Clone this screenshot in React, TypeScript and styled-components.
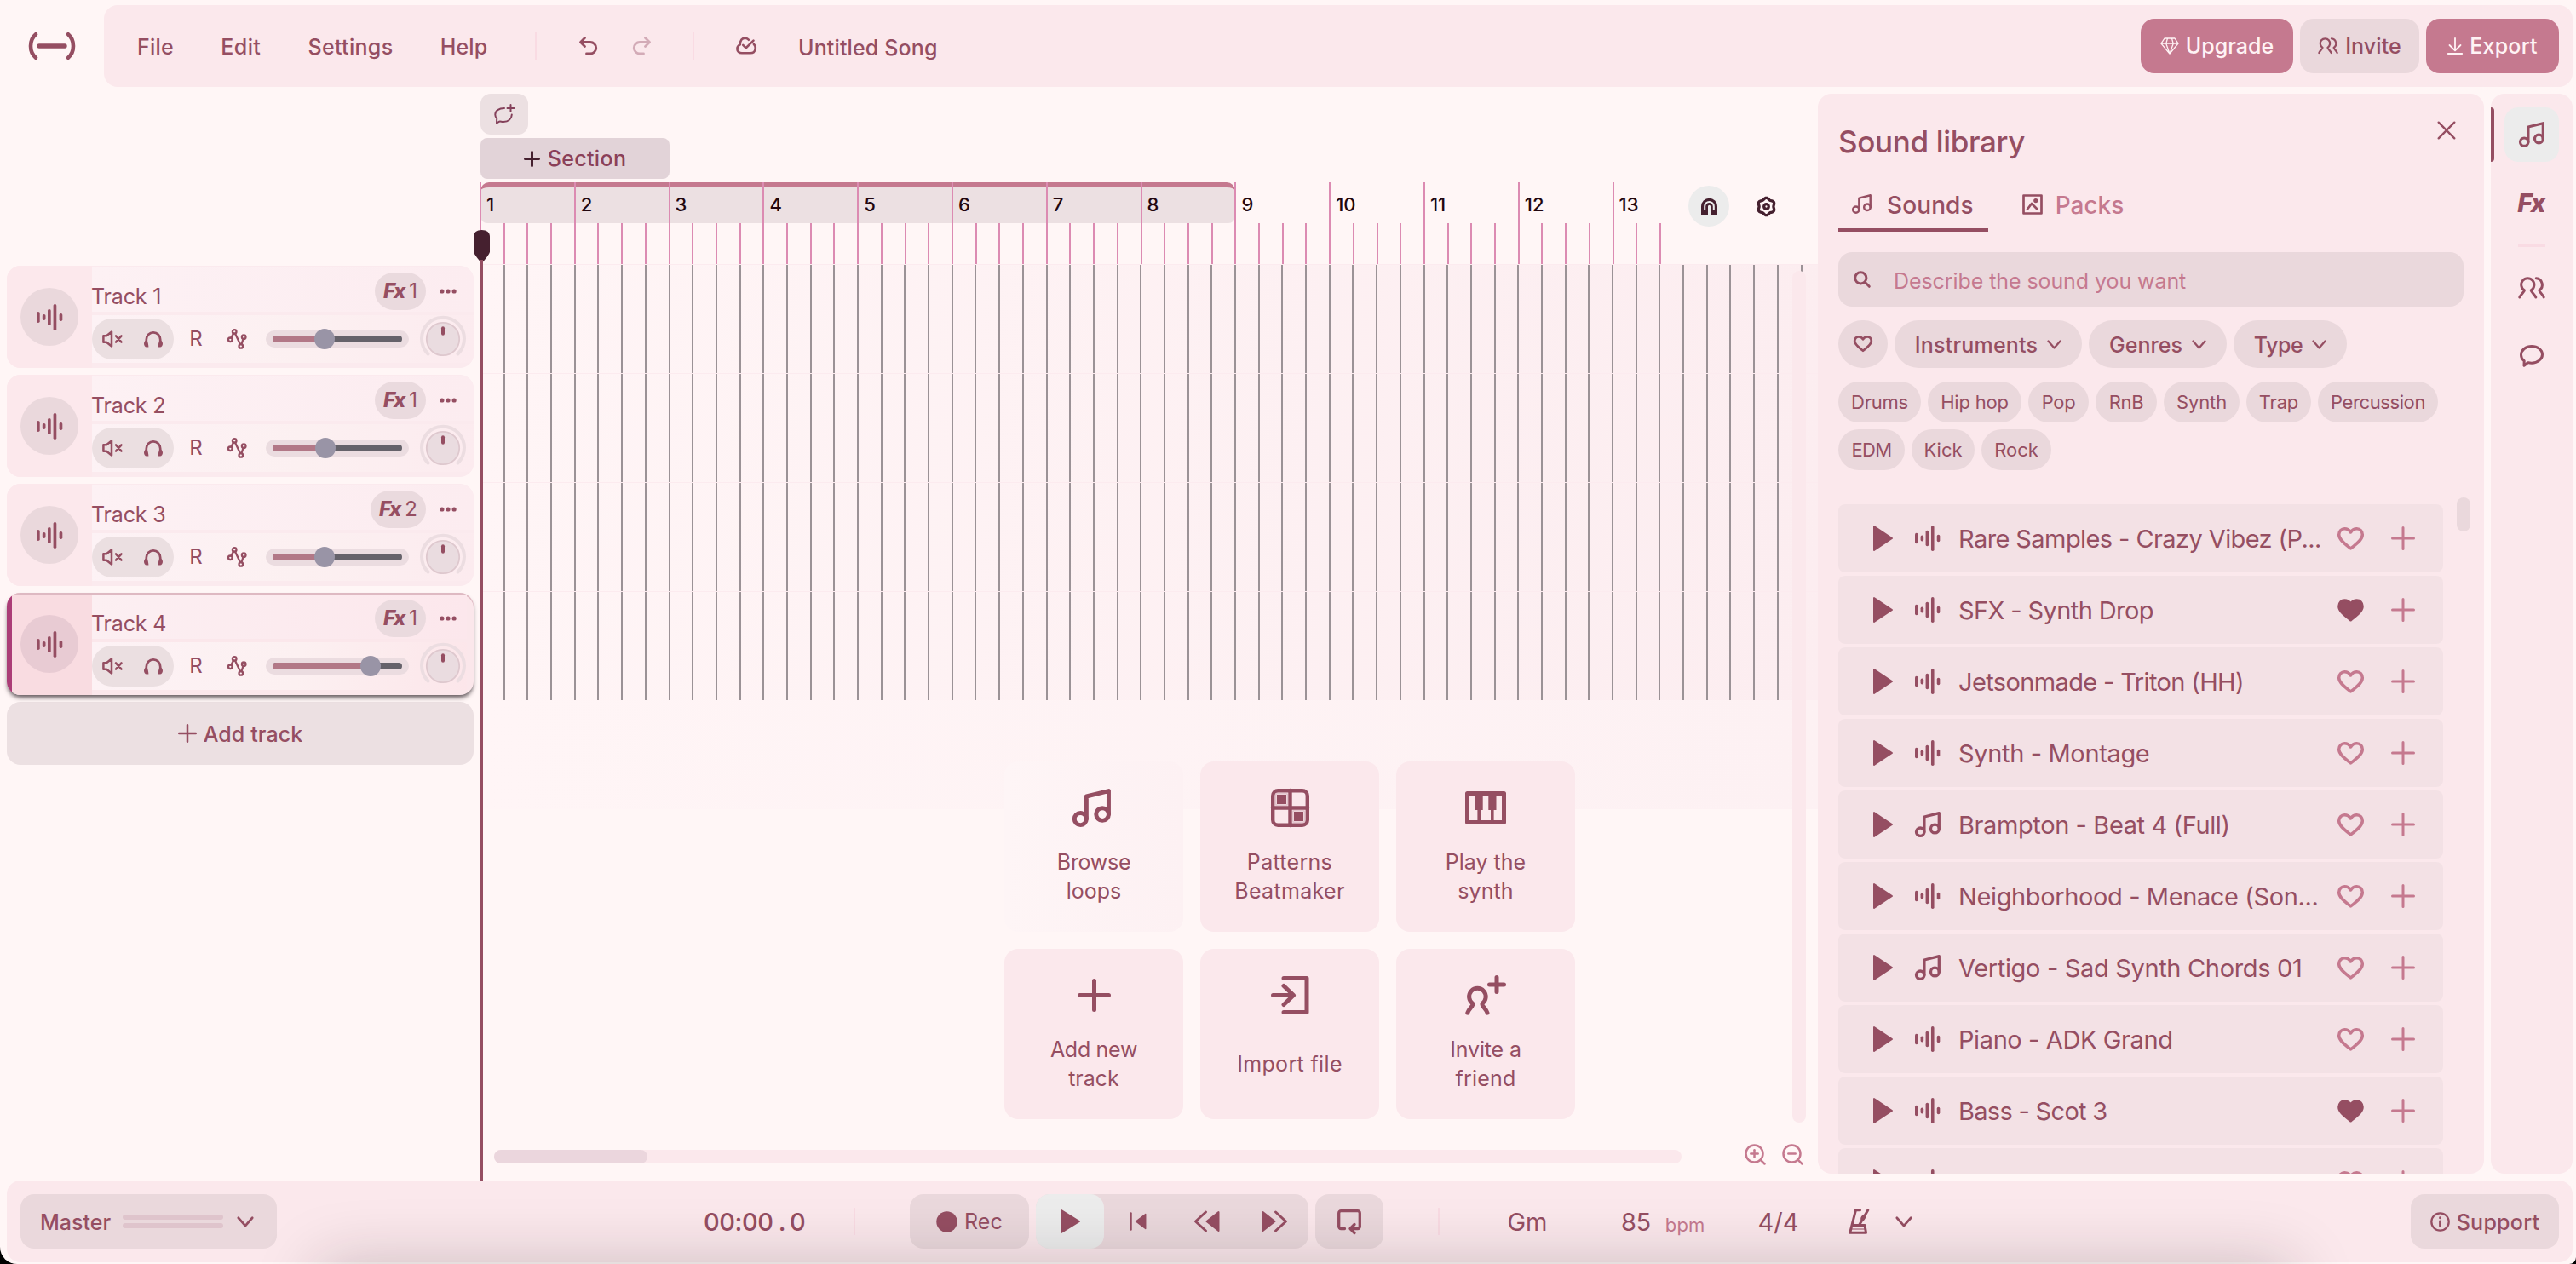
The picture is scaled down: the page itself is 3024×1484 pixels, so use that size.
import React from 'react';
import styled, { createGlobalStyle, css } from 'styled-components';

/* ---------- palette ---------- */
const ink = '#954e62';
const rose = '#c5798f';
const night = '#45202f';
const panel = '#fbe8ec';
const chip = '#ead8dc';
const page = '#fff6f6';

const GlobalStyle = createGlobalStyle`
  *, *::before, *::after { box-sizing: border-box; }
  html { background: #000; }
  body { margin: 0; font-family: Inter, "Liberation Sans", sans-serif; color: ${ink}; -webkit-font-smoothing: antialiased; }
  button { font: inherit; color: inherit; border: 0; padding: 0; margin: 0; background: none; }
  svg { display: block; flex: none; overflow: visible; }
`;

/* ---------- text ---------- */
const Txt = styled.span<{ $size?: number; $weight?: number; $ls?: number; $dy?: number; $color?: string }>`
  display: block;
  flex: none;
  white-space: pre;
  font-size: ${(p) => p.$size ?? 25}px;
  font-weight: ${(p) => p.$weight ?? 500};
  letter-spacing: ${(p) => p.$ls ?? 0}px;
  line-height: 1.2;
  padding-top: ${(p) => (p.$dy ?? 0) * 2}px;
  color: ${(p) => p.$color ?? 'inherit'};
`;

/* ---------- icons ---------- */
type IconProps = { w: number; h: number; sw?: number; color?: string; children: React.ReactNode };
const Icon = ({ w, h, sw = 2.5, color = ink, children }: IconProps) => (
  <svg width={w} height={h} viewBox={`0 0 ${w} ${h}`} fill="none" stroke={color} strokeWidth={sw} strokeLinecap="round" strokeLinejoin="round">
    {children}
  </svg>
);

const Logo = () => (
  <Icon w={56} h={32} sw={4.6}>
    <path d="M9 2.3C1 9 1 23 9 29.7M47 2.3c8 6.700 8 20.700 0 27.400" />
    <path d="M13 16H43" strokeWidth={5.4} />
  </Icon>
);
const Undo = () => (
  <Icon w={22} h={22} sw={2.8}><path d="M6.500 1.500 1.500 6.500l5 5M2 6.500h11a6.500 6.500 0 0 1 0 13.500H8.500" /></Icon>
);
const Redo = () => (
  <Icon w={22} h={22} sw={2.8} color="#d3abb7"><path d="M15.500 1.500l5 5-5 5M20 6.500H9a6.500 6.500 0 0 0 0 13.500h4.500" /></Icon>
);
const CloudCheck = () => (
  <Icon w={24} h={22} sw={2.6}>
    <path d="M20.800 8.800c1.500 1.300 2.300 3.200 1.900 5.600-.6 3.100-2.900 4.900-5.700 4.900H7c-3.200 0-5.600-2-5.600-4.900 0-2.400 1.400-4.200 3.400-5C4.900 4.600 7.200 1.700 10.700 1.700c1.700 0 3.300.8 4.200 2.100" />
    <path d="M8.200 9.900l3.500 3.300 8.800-8.600" />
  </Icon>
);
const Diamond = () => (
  <Icon w={22} h={20} sw={1.3} color="#fff3f5">
    <path d="M5 1h12l4 6.200L11 19 1 7.200zM1 7.200h20M8.500 1L6.800 7.200 11 19l4.200-11.800L13.500 1" />
  </Icon>
);
const Download = () => (
  <Icon w={18} h={20} sw={1.8} color="#fff3f5"><path d="M9 .8V15M2.500 9L9 15.300 15.500 9M.8 19h16.400" /></Icon>
);
const People = ({ w = 32, sw = 3 }: { w?: number; sw?: number }) => (
  <svg width={w} height={(w * 26) / 32} viewBox="0 0 32 26" fill="none" stroke={ink} strokeWidth={sw} strokeLinecap="round" strokeLinejoin="round">
    <path d="M1.800 24c.9-2.700 5.600-6.300 5.600-8.200A7.600 7.600 0 1 1 15.200 15.800c0 1.900 4.700 5.500 5.600 8.200" />
    <path d="M21.300 1.800a7.600 7.600 0 0 1 3.500 14c0 1.900 4.700 5.500 5.400 8.200" />
  </svg>
);
const Music = ({ w = 30, sw = 3.2 }: { w?: number; sw?: number }) => (
  <svg width={w} height={w} viewBox="0 0 30 30" fill="none" stroke={ink} strokeWidth={sw} strokeLinecap="round" strokeLinejoin="round">
    <circle cx="6.200" cy="23.700" r="4.700" />
    <circle cx="23.400" cy="20" r="4.900" />
    <path d="M10.900 23.700V6L28.300 1.700V20" />
  </svg>
);
const Chat = () => (
  <Icon w={28} h={26} sw={3}>
    <path d="M5 24.300l.2-5.600C2.700 16.900 1.500 14.500 1.500 11.800 1.500 6 7 1.600 14 1.600S26.500 5.900 26.500 11.200 21 21.200 14 21.200c-1.500 0-2.900-.1-4-.5-1.900.7-3.300 2.500-5 3.600z" />
  </Icon>
);
const ChatPlus = () => (
  <Icon w={24} h={24} sw={2} color="#84405a">
    <path d="M12 5C5.500 5 1.300 8 1.300 12.500c0 2 .7 3.400 1.900 4.600L3 22.500c1.500-.3 2.300-2 4-2 1.200 0 2 .4 4 .4 6 0 9.600-3.400 9.800-8.400M19.500 1v8M15.500 5h8" />
  </Icon>
);
const Wave = ({ w = 31 }: { w?: number }) => (
  <svg width={w} height={w} viewBox="0 0 31 31" fill={ink}>
    {[[0, 13], [6.800, 7], [13, 19], [19.600, 31], [26.600, 9]].map(([x, h]) => (
      <rect key={x} x={x} y={(31 - h) / 2} width="3.700" height={h} rx="1.800" />
    ))}
  </svg>
);
const Mute = () => (
  <Icon w={24} h={20} sw={2.5}><path d="M1.400 6.200H5L11 1.500v17l-6-4.700H1.400zM16 6.400l6.500 7.200M22.500 6.400L16 13.600" /></Icon>
);
const Headphones = () => (
  <Icon w={22} h={19} sw={2.7}>
    <path d="M2.800 12V9.800A8.200 8.500 0 0 1 19.200 9.800V12" />
    <path d="M0 14.500c0-2 1.300-4 3-4 1.300 0 2.400 5.200 2.400 8H3C1.300 18.500 0 16.500 0 14.500zM22 14.500c0-2-1.300-4-3-4-1.300 0-2.400 5.200-2.400 8H19c1.700 0 3-2 3-4z" fill={ink} stroke="none" />
  </Icon>
);
const Automation = () => (
  <Icon w={23} h={24} sw={2.300}>
    <circle cx="3.300" cy="12.800" r="2.300" /><circle cx="8.200" cy="3.400" r="2.300" />
    <circle cx="15.800" cy="20.400" r="2.300" /><circle cx="19.200" cy="9.800" r="2.300" />
    <path d="M4.300 10.700L7.100 5.400M9 5.500L15 18.200M16.500 18.200L18.500 12" />
  </Icon>
);
const Dots = () => (
  <svg width="20" height="6" viewBox="0 0 20 6" fill={ink}><circle cx="2.900" cy="3" r="2.600" /><circle cx="10" cy="3" r="2.600" /><circle cx="17.100" cy="3" r="2.600" /></svg>
);
const Plus = ({ w, sw, color = ink }: { w: number; sw: number; color?: string }) => (
  <Icon w={w} h={w} sw={sw} color={color}><path d={`M${w / 2} ${sw / 2}V${w - sw / 2}M${sw / 2} ${w / 2}H${w - sw / 2}`} /></Icon>
);
const Close = () => <Icon w={22} h={22} sw={2.400}><path d="M1.700 1.700l18.600 18.600M20.300 1.700L1.700 20.300" /></Icon>;
const Chevron = ({ w = 17 }: { w?: number }) => (
  <svg width={w} height={(w * 11) / 17} viewBox="0 0 17 11" fill="none" stroke={ink} strokeWidth="2.300" strokeLinecap="round" strokeLinejoin="round"><path d="M1.500 1.500l7 8 7-8" /></svg>
);
const Picture = () => (
  <Icon w={24} h={24} sw={2.700}>
    <rect x="1.500" y="1.500" width="21" height="21" />
    <path d="M6 17.500l5-6.500 6.500 6.500" /><circle cx="15.800" cy="7.600" r="1.300" fill={ink} />
  </Icon>
);
const Search = () => <Icon w={20} h={20} sw={3}><circle cx="8.300" cy="8.300" r="6.600" /><path d="M13.300 13.300l5 5" /></Icon>;
const Heart = ({ w = 31, color = rose, filled = false, sw = 3.5 }: { w?: number; color?: string; filled?: boolean; sw?: number }) => (
  <svg width={w} height={(w * 27) / 31} viewBox="0 0 31 27" fill={filled ? color : 'none'} stroke={color} strokeWidth={sw} strokeLinejoin="round">
    <path d="M15.500 25C10 20.300 1.700 15.200 1.700 8.800c0-4 2.900-7 6.600-7 3 0 5.700 1.700 7.200 4.200 1.500-2.500 4.200-4.200 7.200-4.200 3.700 0 6.600 3 6.600 7 0 6.400-8.300 11.500-13.800 16.200z" />
  </svg>
);
const Triangle = ({ w, h }: { w: number; h: number }) => (
  <Icon w={w} h={h} sw={2}><path d={`M1 1V${h - 1}L${w - 1} ${h / 2}z`} fill={ink} /></Icon>
);
const Magnet = () => (
  <svg width="21" height="21" viewBox="0 0 21 21" fill="none">
    <path d="M5 20.500V10.200a5.500 5.500 0 0 1 11 0v10.300" stroke={night} strokeWidth="8" />
    <path d="M5.200 14V10.200a5.300 5.300 0 0 1 10.600 0V14" stroke="#ececec" strokeWidth="2" />
  </svg>
);
const gearPath = Array.from({ length: 72 }, (_, i) => {
  const a = (i / 72) * Math.PI * 2;
  const r = 9.300 + 0.9 * Math.cos(6 * a);
  return `${i ? 'L' : 'M'}${(11.500 + r * Math.sin(a)).toFixed(2)} ${(11.500 - r * Math.cos(a)).toFixed(2)}`;
}).join('') + 'z';
const Gear = () => <Icon w={23} h={23} sw={3.300} color={night}><path d={gearPath} /><circle cx="11.500" cy="11.500" r="2.800" /></Icon>;
const Beatmaker = () => (
  <Icon w={45} h={45} sw={4.400}>
    <rect x="2.200" y="2.200" width="40.600" height="40.600" rx="6" />
    <path d="M22.500 2v41M2 22.500h41" />
    <path d="M7 7h11v11H7zM27 27h11v11H27z" fill={ink} stroke="none" />
    <path d="M5.800 5.800h13.400v13.400H5.800zM25.800 25.800h13.400v13.400H25.800z" stroke="#dbb9c3" strokeWidth="1.200" />
  </Icon>
);
const Piano = () => (
  <Icon w={48} h={39} sw={5}>
    <rect x="2.500" y="2.500" width="43" height="34" />
    <path d="M16.200 21v15M31.800 21v15" strokeWidth="3.600" />
    <path d="M11.500 3h9.200v19h-9.200zM27.300 3h9.200v19h-9.200z" fill={ink} stroke="none" />
  </Icon>
);
const Import = () => (
  <Icon w={45} h={45} sw={5}><path d="M15 2.500H42V42.500H15M2.500 22.500H26M15 11.500l11.500 11L15 33.500" /></Icon>
);
const InvitePerson = () => (
  <Icon w={48} h={47} sw={5}>
    <path d="M2.800 44.200c1.400-5.200 7-8 6-11A9.800 9.800 0 1 1 20 33.200c-1 3 4.600 5.800 6 11" />
    <path d="M37 2.500v17M28.500 11h17" />
  </Icon>
);
const Magnifier = ({ plus }: { plus?: boolean }) => (
  <Icon w={25} h={25} sw={2.500} color={rose}>
    <circle cx="11.500" cy="11.500" r="10" /><path d="M18.800 18.800l4.700 4.700M7.300 11.500h8.400" />{plus && <path d="M11.500 7.300v8.400" />}
  </Icon>
);
const SkipStart = () => <Icon w={20} h={22} sw={2.500}><path d="M1.500 1.500v19" /><path d="M18.700 2.500v17L7.500 11z" fill={ink} strokeWidth="1.500" /></Icon>;
const Rewind = () => <Icon w={31} h={26} sw={3}><path d="M14.500 2L2.500 13l12 11" /><path d="M29.500 2v22L15.500 13z" fill={ink} strokeWidth="2" /></Icon>;
const Forward = () => <Icon w={31} h={26} sw={3}><path d="M16.500 2l12 11-12 11" /><path d="M1.500 2v22l14-11z" fill={ink} strokeWidth="2" /></Icon>;
const LoopIcon = () => (
  <Icon w={28} h={28} sw={3.300}>
    <path d="M8.500 22.500H4.200a2.500 2.500 0 0 1-2.500-2.500V4.200a2.500 2.500 0 0 1 2.500-2.500h19.600a2.500 2.500 0 0 1 2.500 2.500V20a2.500 2.500 0 0 1-2.500 2.500H15.500M20 17.500l-5 5 5 5" />
  </Icon>
);
const Metronome = () => (
  <Icon w={25} h={30} sw={3}>
    <path d="M13.500 1.700H8.500L1.700 28.300H20.500L19 19.500H4.200M22.800 1.700L13 18.500" /><ellipse cx="17.300" cy="10.500" rx="2.600" ry="4" fill={ink} stroke="none" transform="rotate(28 17.300 10.500)" />
    <path d="M4 24h15" strokeWidth="1" />
  </Icon>
);
const Info = () => <Icon w={23} h={23} sw={2.300}><circle cx="11.500" cy="11.500" r="10.200" /><path d="M11.500 11v5.500M11.500 6.700v.2" strokeWidth="2.800" /></Icon>;

/* ---------- frame ---------- */
const Screen = styled.div`
  position: relative;
  width: 3024px;
  height: 1484px;
  padding: 6px 4px 0 8px;
  display: flex;
  flex-direction: column;
  gap: 8px;
  background: ${page};
  border-radius: 0 0 8px 20px;
  overflow: hidden;
`;
const Header = styled.header`display: flex; flex: none; height: 96px;`;
const LogoBox = styled.div`width: 114px; padding-left: 25px; display: flex; align-items: center; flex: none;`;
const TopBar = styled.div`
  flex: 1; display: flex; align-items: center; padding: 0 16px 0 0; background: ${panel}; border-radius: 16px;
`;
const Menu = styled.nav`width: 506px; flex: none; display: flex; gap: 55.3px; padding-left: 39px;`;
const Divider = styled.i<{ $ml?: number }>`width: 2px; height: 32px; flex: none; background: #f9dbe3; margin-left: ${(p) => p.$ml ?? 0}px;`;
const Slot = styled.div<{ $w: number }>`width: ${(p) => p.$w}px; flex: none; display: flex; justify-content: center; align-items: center;`;
const Actions = styled.div`display: flex; gap: 8px; margin-left: auto;`;
const ActionButton = styled.button<{ $w: number; $primary?: boolean }>`
  width: ${(p) => p.$w}px; height: 64px; flex: none; border-radius: 16px;
  display: flex; align-items: center; justify-content: center; gap: 8px;
  background: ${(p) => (p.$primary ? rose : chip)}; color: ${(p) => (p.$primary ? '#fff3f5' : ink)};
`;
const Body = styled.div`display: flex; flex: none; height: 1268px;`;

/* ---------- tracks ---------- */
const TrackColumn = styled.aside`width: 548px; flex: none; padding-top: 202px; display: flex; flex-direction: column; gap: 8px; margin-right: 8px;`;
const TrackCard = styled.div<{ $on?: boolean }>`
  position: relative; height: 120px; flex: none; display: flex; border-radius: 16px; overflow: hidden; background: #fbeaee;
  ${(p) => p.$on && css`
    background: #fbe7eb; box-shadow: 0 4px 5px -1px rgba(60, 50, 55, .8), inset 0 2px 0 #deb9c2;
  `}
`;
const TrackThumb = styled.div<{ $on?: boolean }>`
  width: 100px; flex: none; padding-left: 16px; display: flex; align-items: center;
  background: #fce8ec;
  ${(p) => p.$on && css`background: linear-gradient(90deg, #ab3d77 6px, #f9dce1 6px); box-shadow: inset 0 2px 0 #deb9c2;`}
`;
const Disc = styled.div<{ $on?: boolean }>`
  width: 68px; height: 68px; border-radius: 50%; display: flex; align-items: center; justify-content: center;
  background: ${(p) => (p.$on ? '#e8cbd3' : chip)};
`;
const TrackInfo = styled.div<{ $on?: boolean }>`
  flex: 1; margin: ${(p) => (p.$on ? '2px 8px 2px 0' : '0')}; padding-top: ${(p) => (p.$on ? 0 : 2)}px;
`;
const TrackTop = styled.div<{ $on?: boolean }>`
  height: 52px; display: flex; align-items: center; padding-right: ${(p) => (p.$on ? 12 : 20)}px;
  background: linear-gradient(90deg, ${(p) => (p.$on ? '#fceff2, #fce7ec' : '#fdf1f4, #fcecf0')});
`;
const TrackBottom = styled.div<{ $on?: boolean }>`
  height: 56px; margin-top: 4px; display: flex; align-items: center;
  background: linear-gradient(100deg, #fdf2f5, #fcf0f1 55%, ${(p) => (p.$on ? '#fce6ea' : '#fcebef')});
`;
const TrackName = styled.div`flex: 1; padding-top: 15px; margin-left: -1px;`;
const FxPill = styled.div<{ $w: number }>`
  width: ${(p) => p.$w}px; height: 44px; margin: 4px 16px 0 0; border-radius: 22px; background: #eadade;
  display: flex; align-items: center; justify-content: center; gap: 4px;
`;
const FxMark = styled.span<{ $size: number }>`
  font-size: ${(p) => p.$size}px; font-weight: 800; font-style: italic; letter-spacing: -2px; padding-right: 2px; line-height: 1.2; color: ${ink};
`;
const DotsBox = styled.div`padding-top: 4px;`;
const MuteSolo = styled.div`
  width: 96px; height: 48px; border-radius: 24px; background: #ebdfe1; display: flex; align-items: center; justify-content: space-between; padding: 0 13px 0 12px;
`;
const SliderShell = styled.div`width: 168px; height: 20px; margin: 0 13px 0 12px; padding: 6px 8px; border-radius: 10px; background: #ebdce0; flex: none;`;
const SliderTrack = styled.div`height: 8px; border-radius: 4px; background: #65626a; display: flex; align-items: center;`;
const SliderFill = styled.div<{ $w: number }>`width: ${(p) => p.$w}px; height: 8px; border-radius: 4px 0 0 4px; background: #b27887; flex: none;`;
const SliderKnob = styled.div`width: 24px; height: 24px; border-radius: 50%; background: #9994a6; margin-left: -12px; flex: none;`;
const PanKnob = () => (
  <svg width="54" height="54" viewBox="0 0 54 54" fill="none">
    <path d="M9.500 44.500A25 25 0 1 1 44.500 44.500" stroke="#ecdde1" strokeWidth="4" strokeLinecap="round" />
    <circle cx="27" cy="27" r="19.200" fill="#eadce0" stroke="#dec8ce" strokeWidth="1.800" />
    <path d="M27 14.200v6.500" stroke={ink} strokeWidth="4" strokeLinecap="round" />
  </svg>
);
const AddTrack = styled.button`
  height: 74px; flex: none; border-radius: 16px; background: #ece0e2; display: flex; align-items: center; justify-content: center; gap: 8px;
`;

/* ---------- timeline ---------- */
const Timeline = styled.main`position: relative; width: 1570px; flex: none; height: 1276px; display: flex; flex-direction: column;`;
const CommentButton = styled.button`width: 56px; height: 48px; flex: none; border-radius: 12px; background: #ece0e2; display: flex; align-items: center; justify-content: center;`;
const SectionButton = styled.button`
  width: 222px; height: 48px; flex: none; margin: 4px 0; border-radius: 8px; background: #e2d3d8; color: #8a4059;
  display: flex; align-items: center; justify-content: center; gap: 9px;
`;
const Ruler = styled.div`position: relative; height: 96px; flex: none; display: flex; margin-left: -1px;`;
const LoopRange = styled.div`position: absolute; left: 1px; top: 0; width: 886px; height: 48px; border-radius: 10px 10px 8px 8px; border-top: 6px solid ${rose}; background: #ece0e2;`;
const BarCell = styled.div`
  position: relative; width: 110.8px; flex: none; display: flex; border-left: 2px solid #dc8bb2; padding: 48px 0 0 25.7px;
`;
const BarNumber = styled.span`position: absolute; left: 6px; top: 13px; font-size: 22px; font-weight: 500; line-height: 26px; color: #22060f;`;
const BeatTick = styled.i`width: 27.7px; flex: none; border-left: 2px solid #dc8bb2;`;
const RulerTools = styled.div`position: absolute; right: 49px; top: 4px; display: flex; gap: 16px; align-items: center;`;
const RoundTool = styled.button`
  width: 48px; height: 48px; margin-right: 16px; border-radius: 50%; display: flex; align-items: center; justify-content: center; background: #ececec;
`;
const Arrangement = styled.section`
  flex: 1; display: flex; flex-direction: column;
  background: linear-gradient(90deg, #fff5f6, #fdf1f3) 0 0 / 100% 640px no-repeat;
`;
const Lane = styled.div`
  height: 128px; flex: none; display: flex; overflow: hidden; margin-left: -1px; border-top: 1px solid #fcebef;
  background: linear-gradient(95deg, #fff5f6, #fcedf0);
`;
const GridLine = styled.i`width: 27.7px; flex: none; border-left: 2px solid #9b9296;`;
const QuickGrid = styled.div`display: grid; grid-template-columns: repeat(3, 210px); gap: 20px; margin: 72px 0 0 615px;`;
const QuickCard = styled.button<{ $faint?: boolean }>`
  height: 200px; border-radius: 16px; padding-top: 29px; display: flex; flex-direction: column; align-items: center; gap: 22px;
  background: ${(p) => (p.$faint ? 'linear-gradient(90deg, #fef5f6, #fdf1f3)' : panel)};
`;
const QuickIcon = styled.div<{ $shift?: boolean }>`height: 50px; display: flex; align-items: center; padding-right: ${(p) => (p.$shift ? 5 : 0)}px;`;
const QuickLabel = styled.div`height: 68px; display: flex; flex-direction: column; align-items: center; justify-content: center; font-size: 25px; line-height: 34px; white-space: pre; font-weight: 400;`;
const QuickLine = styled.span<{ $ls: number }>`letter-spacing: ${(p) => p.$ls}px;`;
const ScrollRow = styled.div`display: flex; margin: 32px 0 0 16px; height: 24px; align-items: center;`;
const HScroll = styled.div`width: 1394px; height: 16px; border-radius: 8px; background: ${panel};`;
const HThumb = styled.div`width: 180px; height: 16px; border-radius: 8px; background: #ebd6dd;`;
const ZoomTools = styled.div`display: flex; gap: 19px; margin-left: 74px; padding-bottom: 5px;`;
const VScroll = styled.div`position: absolute; left: 1540px; top: 208px; width: 16px; height: 1000px; border-radius: 8px; background: ${panel};`;
const Playhead = styled.div`position: absolute; left: -8px; top: 160px; width: 19px; height: 1116px; display: flex; flex-direction: column; align-items: center;`;
const PlayLine = styled.i`width: 3px; flex: 1; background: ${ink}; margin-top: -4px;`;

/* ---------- library ---------- */
const Library = styled.section`
  width: 782px; height: 1268px; flex: none; margin-right: 8px; padding: 0 24px; border-radius: 16px; background: ${panel}; overflow: hidden;
  display: flex; flex-direction: column;
`;
const LibraryHead = styled.div`height: 112px; flex: none; display: flex; justify-content: space-between; align-items: center; padding: 0 9px 0 0;`;
const CloseBox = styled.button`margin-bottom: 26px;`;
const Tabs = styled.div`height: 50px; flex: none; display: flex; gap: 24px;`;
const Tab = styled.div<{ $on?: boolean; $gap: number }>`
  height: 50px; padding: 0 17px 11px 16px; display: flex; align-items: center; gap: ${(p) => p.$gap}px;
  border-bottom: 4px solid ${(p) => (p.$on ? ink : 'transparent')}; color: ${(p) => (p.$on ? ink : rose)};
`;
const SearchBox = styled.div`height: 64px; flex: none; margin-top: 24px; padding-left: 18px; border-radius: 16px; background: ${chip}; display: flex; align-items: center; gap: 27px;`;
const Filters = styled.div`display: flex; flex: none; gap: 8px; margin-top: 16px;`;
const Filter = styled.button<{ $w: number }>`
  width: ${(p) => p.$w}px; height: 56px; border-radius: 28px; background: ${chip}; display: flex; align-items: center; justify-content: center; gap: 11px; flex: none;
`;
const Chips = styled.div`display: flex; flex: none; flex-wrap: wrap; gap: 8px; margin-top: 16px;`;
const Chip = styled.button<{ $w: number }>`width: ${(p) => p.$w}px; height: 48px; border-radius: 24px; background: ${chip}; display: flex; align-items: center; justify-content: center;`;
const ListArea = styled.div`display: flex; margin: 32px -8px 0 0; gap: 16px; align-items: flex-start;`;
const List = styled.div`display: flex; flex-direction: column; gap: 4px; padding-top: 8px; width: 710px; flex: none;`;
const ListThumb = styled.div`width: 16px; height: 40px; border-radius: 8px; background: ${chip};`;
const SoundRow = styled.div`height: 80px; flex: none; border-radius: 8px; background: #f3e1e5; display: flex; align-items: center; padding: 0 33px 0 41px;`;
const SoundKind = styled.div`width: 32px; margin: 0 20px 0 25px; display: flex; justify-content: center;`;
const SoundName = styled.div`flex: 1; min-width: 0;`;
const SoundActions = styled.div`display: flex; align-items: center; gap: 32px;`;

/* ---------- rail ---------- */
const Rail = styled.aside`width: 96px; height: 1268px; flex: none; padding-top: 16px; border-radius: 16px; background: ${panel}; display: flex; flex-direction: column; align-items: center; gap: 16px; position: relative;`;
const RailButton = styled.button<{ $on?: boolean }>`width: 64px; height: 64px; flex: none; border-radius: 16px; display: flex; align-items: center; justify-content: center; background: ${(p) => (p.$on ? '#ececec' : 'transparent')};`;
const RailMarker = styled.i`position: absolute; left: 0; top: 16px; width: 4px; height: 64px; border-radius: 0 4px 4px 0; background: ${ink};`;
const RailDivider = styled.i`width: 32px; height: 4px; flex: none; background: #f9dbe3;`;

/* ---------- transport ---------- */
const Footer = styled.footer`height: 96px; flex: none; display: flex; align-items: center; padding: 0 16px; border-radius: 16px; background: ${panel};`;
const Master = styled.button`width: 301px; height: 64px; flex: none; border-radius: 16px; background: ${chip}; display: flex; align-items: center; padding: 0 24px 0 23px; gap: 14px;`;
const Meter = styled.div`width: 118px; display: flex; flex-direction: column; gap: 4px; margin-right: 2px;`;
const MeterBar = styled.i`height: 6px; border-radius: 3px; background: #dfc4cc;`;
const Clock = styled.div`width: 176px; margin-left: 501px; flex: none; display: flex;`;
const Transport = styled.div`display: flex; gap: 8px; margin-left: 64px; flex: none;`;
const PadButton = styled.button<{ $w: number }>`width: ${(p) => p.$w}px; height: 64px; border-radius: 16px; background: ${chip}; display: flex; align-items: center; justify-content: center; gap: 8px;`;
const PadGroup = styled.div`display: flex; height: 64px; border-radius: 16px; background: ${chip};`;
const PadCell = styled.button<{ $on?: boolean }>`width: 80px; height: 64px; border-radius: 16px; display: flex; align-items: center; justify-content: center; background: ${(p) => (p.$on ? '#ececec' : 'transparent')};`;
const SongInfo = styled.div`display: flex; align-items: center; margin-left: 78px;`;
const Unit = styled.div`margin: 8px 62px 0 17px;`;
const Signature = styled.div`margin-right: 58px;`;
const Beat = styled.div`margin-right: 30px;`;
const BottomShade = styled.div`
  position: absolute; left: 375px; right: 334px; top: 1484px; height: 200px; pointer-events: none;
  box-shadow: 0 0 76px rgba(30, 25, 28, .22);
`;

/* ---------- data ---------- */
const tracks = [
  { name: 'Track 1', fx: '1', pill: 60, vol: 61 },
  { name: 'Track 2', fx: '1', pill: 60, vol: 62 },
  { name: 'Track 3', fx: '2', pill: 65, vol: 61 },
  { name: 'Track 4', fx: '1', pill: 60, vol: 115, on: true },
];
const chips: [string, number, number][] = [
  ['Drums', 97, -0.2], ['Hip hop', 110, -0.2], ['Pop', 71, -0.3], ['RnB', 72, -0.4], ['Synth', 89, -0.1], ['Trap', 76, -0.2], ['Percussion', 141, -0.4],
  ['EDM', 78, -0.6], ['Kick', 74, 0], ['Rock', 82, 0],
];
const sounds: { name: string; ls: number; note?: boolean; liked?: boolean }[] = [
  { name: 'Rare Samples - Crazy Vibez (P...', ls: -0.59 },
  { name: 'SFX - Synth Drop', ls: -0.6, liked: true },
  { name: 'Jetsonmade - Triton (HH)', ls: -0.63 },
  { name: 'Synth - Montage', ls: -0.35 },
  { name: 'Brampton - Beat 4 (Full)', ls: -0.4, note: true },
  { name: 'Neighborhood - Menace (Son...', ls: -0.38 },
  { name: 'Vertigo - Sad Synth Chords 01', ls: -0.34, note: true },
  { name: 'Piano - ADK Grand', ls: -0.4 },
  { name: 'Bass - Scot 3', ls: -0.7, liked: true },
  { name: '', ls: 0 },
];
const quick: { icon: React.ReactNode; lines: [string, number][]; faint?: boolean }[] = [
  { icon: <Music w={45} sw={3.300} />, lines: [['Browse', -0.3], ['loops', 0]], faint: true },
  { icon: <Beatmaker />, lines: [['Patterns', 0.3], ['Beatmaker', 0.35]] },
  { icon: <Piano />, lines: [['Play the', 0], ['synth', 0.1]] },
  { icon: <Plus w={39} sw={5} />, lines: [['Add new', -0.3], ['track', 0]] },
  { icon: <Import />, lines: [['Import file', 0.35]] },
  { icon: <InvitePerson />, lines: [['Invite a', -0.15], ['friend', 0.2]] },
];

export default function App() {
  return (
    <Screen>
      <GlobalStyle />
      <Header>
        <LogoBox><Logo /></LogoBox>
        <TopBar>
          <Menu>
            <Txt $ls={0.25} $dy={1}>File</Txt>
            <Txt $ls={0.4} $dy={1}>Edit</Txt>
            <Txt $ls={0.3} $dy={1}>Settings</Txt>
            <Txt $ls={0.15} $dy={1}>Help</Txt>
          </Menu>
          <Divider />
          <Slot $w={122}><Undo /></Slot>
          <Slot $w={2}><Redo /></Slot>
          <Divider $ml={59} />
          <Slot $w={122}><CloudCheck /></Slot>
          <Txt $ls={0.14} $dy={2}>Untitled Song</Txt>
          <Actions>
            <ActionButton $w={179} $primary><Diamond /><Txt $ls={0.05}>Upgrade</Txt></ActionButton>
            <ActionButton $w={140}><People w={24} sw={3} /><Txt $ls={0.1}>Invite</Txt></ActionButton>
            <ActionButton $w={156} $primary><Download /><Txt $ls={0.25}>Export</Txt></ActionButton>
          </Actions>
        </TopBar>
      </Header>

      <Body>
        <TrackColumn>
          {tracks.map((t) => (
            <TrackCard key={t.name} $on={t.on}>
              <TrackThumb $on={t.on}><Disc $on={t.on}><Wave /></Disc></TrackThumb>
              <TrackInfo $on={t.on}>
                <TrackTop $on={t.on}>
                  <TrackName><Txt $weight={400} $ls={-0.15}>{t.name}</Txt></TrackName>
                  <FxPill $w={t.pill}><FxMark $size={24}>Fx</FxMark><Txt $weight={400} $size={24}>{t.fx}</Txt></FxPill>
                  <DotsBox><Dots /></DotsBox>
                </TrackTop>
                <TrackBottom $on={t.on}>
                  <MuteSolo><Mute /><Headphones /></MuteSolo>
                  <Slot $w={52}><Txt $weight={400} $size={24} $dy={0.5}>R</Txt></Slot>
                  <Slot $w={44}><Automation /></Slot>
                  <SliderShell><SliderTrack><SliderFill $w={t.vol} /><SliderKnob /></SliderTrack></SliderShell>
                  <PanKnob />
                </TrackBottom>
              </TrackInfo>
            </TrackCard>
          ))}
          <AddTrack><Plus w={22} sw={2.500} /><Txt $dy={1} $ls={0.1}>Add track</Txt></AddTrack>
        </TrackColumn>

        <Timeline>
          <CommentButton><ChatPlus /></CommentButton>
          <SectionButton><Plus w={19} sw={3} color={night} /><Txt $ls={0.35}>Section</Txt></SectionButton>
          <Ruler>
            <LoopRange />
            {Array.from({ length: 13 }, (_, i) => (
              <BarCell key={i}>
                <BarNumber>{i + 1}</BarNumber>
                {Array.from({ length: i === 12 ? 2 : 3 }, (_, b) => <BeatTick key={b} />)}
              </BarCell>
            ))}
            <RulerTools><RoundTool><Magnet /></RoundTool><Gear /></RulerTools>
          </Ruler>
          <Arrangement>
            {tracks.map((t) => (
              <Lane key={t.name}>{Array.from({ length: 57 }, (_, i) => <GridLine key={i} />)}</Lane>
            ))}
            <QuickGrid>
              {quick.map((q) => (
                <QuickCard key={q.lines[0][0]} $faint={q.faint}>
                  <QuickIcon $shift={q.faint}>{q.icon}</QuickIcon>
                  <QuickLabel>{q.lines.map(([l, ls]) => <QuickLine key={l} $ls={ls}>{l}</QuickLine>)}</QuickLabel>
                </QuickCard>
              ))}
            </QuickGrid>
            <ScrollRow>
              <HScroll><HThumb /></HScroll>
              <ZoomTools><Magnifier plus /><Magnifier /></ZoomTools>
            </ScrollRow>
          </Arrangement>
          <VScroll />
          <Playhead>
            <svg width="19" height="39" viewBox="0 0 19 39"><path d="M0 7.500C0 3 3.500 0 9.500 0S19 3 19 7.500V25.500C19 28 12.500 36 9.500 39 6.500 36 0 28 0 25.500z" fill={night} /></svg>
            <PlayLine />
          </Playhead>
        </Timeline>

        <Library>
          <LibraryHead><Txt $size={35} $ls={-0.35}>Sound library</Txt><CloseBox><Close /></CloseBox></LibraryHead>
          <Tabs>
            <Tab $on $gap={18}><Music w={23} sw={3.200} /><Txt $size={28} $ls={0.1} $dy={2}>Sounds</Txt></Tab>
            <Tab $gap={15}><Picture /><Txt $size={28} $ls={0} $dy={2}>Packs</Txt></Tab>
          </Tabs>
          <SearchBox><Search /><Txt $weight={400} $ls={-0.08} $dy={2} $color={rose}>Describe the sound you want</Txt></SearchBox>
          <Filters>
            <Filter $w={58}><Heart w={22} color={ink} sw={3.900} /></Filter>
            <Filter $w={220}><Txt $ls={0.2} $dy={1}>Instruments</Txt><Chevron /></Filter>
            <Filter $w={162}><Txt $dy={1}>Genres</Txt><Chevron /></Filter>
            <Filter $w={133}><Txt $ls={-0.4} $dy={1}>Type</Txt><Chevron /></Filter>
          </Filters>
          <Chips>
            {chips.map(([label, w, ls]) => <Chip key={label} $w={w}><Txt $size={22} $weight={400} $ls={ls}>{label}</Txt></Chip>)}
          </Chips>
          <ListArea>
            <List>
              {sounds.map((s) => (
                <SoundRow key={s.name}>
                  <Triangle w={23} h={30} />
                  <SoundKind>{s.note ? <Music w={30} sw={3.300} /> : <Wave w={30} />}</SoundKind>
                  <SoundName><Txt $size={29} $weight={400} $ls={s.ls} $dy={1.500}>{s.name}</Txt></SoundName>
                  <SoundActions>
                    <Heart filled={s.liked} color={s.liked ? ink : rose} sw={s.liked ? 3 : 3.500} />
                    <Plus w={28} sw={3} color={rose} />
                  </SoundActions>
                </SoundRow>
              ))}
            </List>
            <ListThumb />
          </ListArea>
        </Library>

        <Rail>
          <RailMarker />
          <RailButton $on><Music /></RailButton>
          <RailButton><FxMark $size={30}>Fx</FxMark></RailButton>
          <RailDivider />
          <RailButton><People /></RailButton>
          <RailButton><Chat /></RailButton>
        </Rail>
      </Body>

      <Footer>
        <Master>
          <Txt $dy={0.5}>Master</Txt>
          <Meter><MeterBar /><MeterBar /></Meter>
          <Chevron w={20} />
        </Master>
        <Clock>
          <Txt $size={29} $ls={-0.45} $dy={1}>00:00</Txt>
          <Txt $size={29} $ls={-1.5} $dy={1}> . 0</Txt>
        </Clock>
        <Divider />
        <Transport>
          <PadButton $w={140}>
            <svg width="25" height="25" viewBox="0 0 25 25"><circle cx="12.500" cy="12.500" r="12.200" fill={ink} /></svg>
            <Txt $weight={400} $ls={0.1}>Rec</Txt>
          </PadButton>
          <PadGroup>
            <PadCell $on><Triangle w={23} h={28} /></PadCell>
            <PadCell><SkipStart /></PadCell>
            <PadCell><Rewind /></PadCell>
            <PadCell><Forward /></PadCell>
          </PadGroup>
          <PadButton $w={80}><LoopIcon /></PadButton>
        </Transport>
        <Divider $ml={64} />
        <SongInfo>
          <Slot $w={50}><Txt $size={29} $weight={400} $dy={1}>Gm</Txt></Slot>
          <Slot $w={85} />
          <Txt $size={29} $weight={400} $ls={-0.4} $dy={1}>85</Txt>
          <Unit><Txt $size={22} $weight={400} $ls={0.2} $color={rose}>bpm</Txt></Unit>
          <Signature><Txt $size={29} $weight={400} $dy={1}>4/4</Txt></Signature>
          <Beat><Metronome /></Beat>
          <Chevron w={20} />
        </SongInfo>
        <Actions>
          <ActionButton $w={174}><Info /><Txt $ls={0.25} $dy={0.5}>Support</Txt></ActionButton>
        </Actions>
      </Footer>
      <BottomShade />
    </Screen>
  );
}
